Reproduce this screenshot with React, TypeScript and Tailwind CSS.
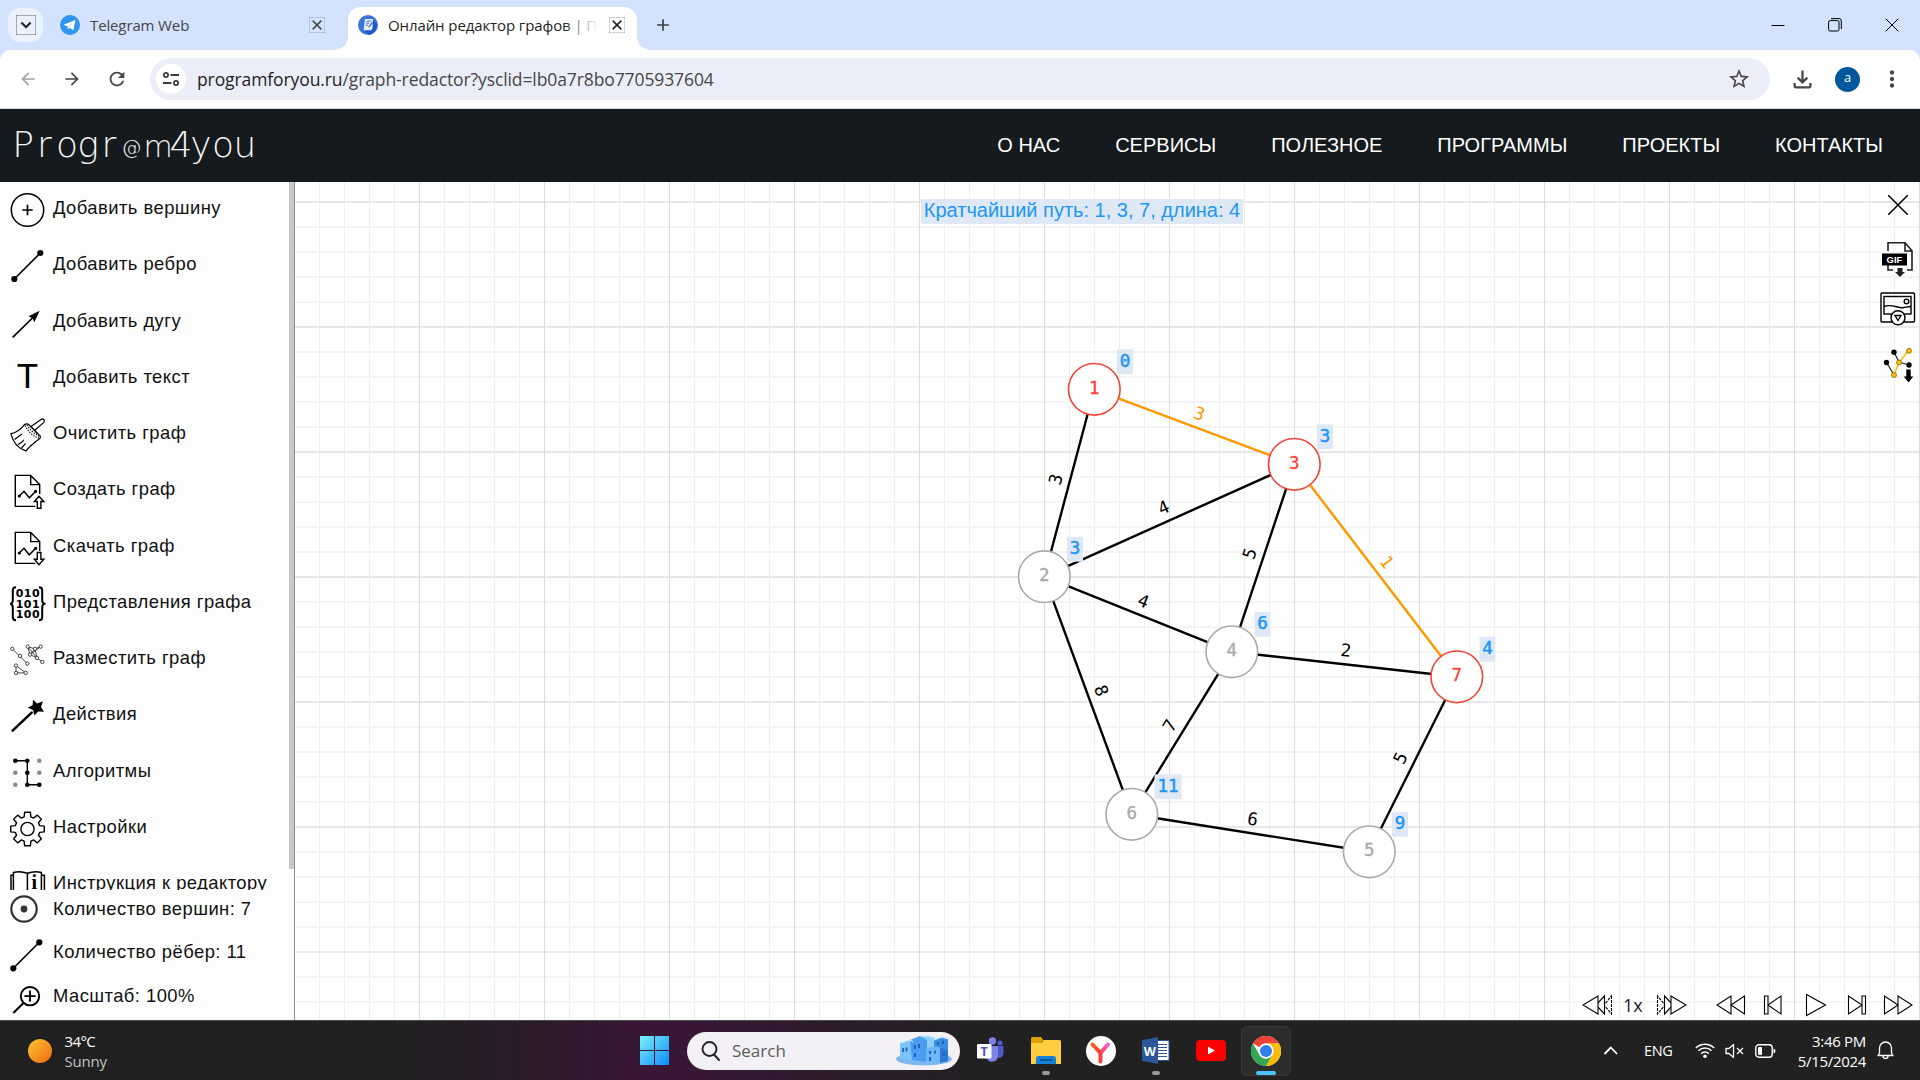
import React from "react";
import {
  MdArrowBack,
  MdArrowForward,
  MdRefresh,
  MdStarBorder,
  MdOutlineFileDownload,
  MdMoreVert,
  MdClose,
  MdAdd,
  MdKeyboardArrowDown,
} from "react-icons/md";

const INK = "#000";

/* ---------- Browser chrome ---------- */

function TabStrip() {
  return (
    <div className="flex h-[50px] shrink-0 items-stretch bg-[#d3e3fd]">
      <div className="flex w-[52px] items-center pl-2">
        <div className="flex h-[34px] w-[35px] items-center justify-center rounded-xl bg-[#ebf1fe]">
          <MdKeyboardArrowDown size={20} color="#1f1f1f" strokeWidth={0.8} stroke="#1f1f1f" />
        </div>
      </div>
      <div className="flex w-[280px] items-center pl-2">
        <svg width="20" height="20" viewBox="0 0 20 20">
          <circle cx="10" cy="10" r="10" fill="#2e96ee" />
          <path d="M3.6 9.8 15.4 5l-2 10.4-3.6-2.7-1.9 1.9-.3-3.2z" fill="#fff" />
          <path d="m7.6 11.4 5.3-4-4 4.9-.9 2.2z" fill="#b5d8f7" />
        </svg>
        <span className="ml-[10px] w-[219px] text-[15px] leading-5 tracking-[-0.13px] text-[#474747]">
          Telegram Web
        </span>
        <MdClose size={16} color="#474747" stroke="#474747" strokeWidth={0.6} />
      </div>
      <div className="flex h-[43px] self-end">
        <svg width="16" height="43" viewBox="0 0 16 43">
          <path d="M0 43C10 43 16 38 16 29V43z" fill="#fff" />
        </svg>
        <div className="flex w-[289px] items-center rounded-t-[13px] bg-white pb-[7px] pl-[10px]">
          <svg width="20" height="20" viewBox="0 0 20 20">
            <circle cx="10" cy="10" r="10" fill="#3b73dd" />
            <path d="M14 4 19 9a10 10 0 0 1-8 11L6 15z" fill="#2257c4" />
            <path d="M7 4h8l-.6 9.5-1.4 1.8H5.6z" fill="#e6eefc" />
            <path d="M8.4 6.2h4.6M8.2 8.2H11M8 10.2h2" stroke="#3b73dd" strokeWidth="1" />
            <path d="m10 12 4-5 1 .8-4 4.7z" fill="#2a62d0" />
          </svg>
          <div className="relative ml-[10px] mr-[10px] w-[211px] overflow-hidden whitespace-nowrap text-[15px] leading-5 tracking-[-0.1px] text-[#1f1f1f]">
            Онлайн редактор графов | Построение
            <span className="absolute inset-y-0 right-0 w-[36px] bg-gradient-to-r from-white/0 to-white" />
          </div>
          <MdClose size={16} color="#1f1f1f" stroke="#1f1f1f" strokeWidth={0.6} />
        </div>
        <svg width="16" height="43" viewBox="0 0 16 43">
          <path d="M16 43C6 43 0 38 0 29V43z" fill="#fff" />
        </svg>
      </div>
      <div className="flex flex-1 items-center">
        <MdAdd size={20} color="#3c3c3c" />
      </div>
      <div className="flex items-center gap-[43px] pr-[21px]">
        <svg width="14" height="14" viewBox="0 0 14 14">
          <path d="M.5 7.5h13" stroke="#000" />
        </svg>
        <svg width="14" height="14" viewBox="0 0 14 14" fill="none" stroke="#000">
          <rect x=".6" y="2.6" width="10.4" height="10.4" rx="1.5" />
          <path d="M3 .6h8A2.2 2.2 0 0 1 13.3 3v8" />
        </svg>
        <svg width="14" height="14" viewBox="0 0 14 14">
          <path d="m.7.7 12.6 12.6M13.3.7.7 13.3" stroke="#000" />
        </svg>
      </div>
    </div>
  );
}

function Toolbar() {
  return (
    <div className="h-[59px] shrink-0 bg-[#d3e3fd]">
      <div className="flex h-full items-center rounded-t-[11px] border-b border-[#d5dde0] bg-white">
        <div className="flex w-[150px] items-center gap-[24px] pl-[18px]">
          <MdArrowBack size={20} color="#a2a2a2" />
          <MdArrowForward size={20} color="#474747" />
          <MdRefresh size={22} color="#474747" />
        </div>
        <div className="flex h-[42px] w-[1620px] items-center rounded-full bg-[#ebeef8] pl-[6px] pr-[19px]">
          <div className="flex size-[30px] items-center justify-center rounded-full bg-white">
            <svg width="16" height="16" viewBox="0 0 16 16" fill="none" stroke="#3c3c3c" strokeWidth="1.8">
              <circle cx="3" cy="4" r="2.1" />
              <path d="M7.5 4H16M0 12h8.5" />
              <circle cx="13" cy="12" r="2.1" />
            </svg>
          </div>
          <span className="ml-[11px] flex-1 text-[17.5px] leading-6 tracking-[-0.1px] text-[#474747]">
            <span className="text-[#1f1f1f]">programforyou.ru</span>/graph-redactor?ysclid=lb0a7r8bo7705937604
          </span>
          <MdStarBorder size={24} color="#474747" />
        </div>
        <div className="flex flex-1 items-center pl-[19px]">
          <MdOutlineFileDownload size={27} color="#474747" />
          <div className="ml-[19px] flex size-[25px] items-center justify-center rounded-full bg-[#00579b] pb-[2px] text-[13px] font-medium text-white">
            a
          </div>
          <MdMoreVert size={26} color="#474747" className="ml-[19px]" />
        </div>
      </div>
    </div>
  );
}

/* ---------- Site header ---------- */

const LOGO: [string, number][] = [
  ["P", 23], ["r", 44.5], ["o", 67], ["g", 88], ["r", 109], ["@", 131.5],
  ["m", 158], ["4", 181], ["y", 201], ["o", 223], ["u", 245],
];

const NAV = ["О НАС", "СЕРВИСЫ", "ПОЛЕЗНОЕ", "ПРОГРАММЫ", "ПРОЕКТЫ", "КОНТАКТЫ"];

function SiteHeader() {
  return (
    <header className="flex h-[73px] shrink-0 items-center justify-between bg-[#151a1e] pr-[37px] font-['Liberation_Sans',sans-serif]">
      <svg width="270" height="73" viewBox="0 0 270 73">
        <g fill="#f4f4f4" textAnchor="middle" fontFamily="'DejaVu Sans', sans-serif" fontWeight="200" fontSize="36">
          {LOGO.map(([ch, x], i) => (
            <text key={i} x={x} y={ch === "@" ? 45 : 47.5} fontSize={ch === "@" ? 20 : ch === "m" ? 30 : 36}>
              {ch}
            </text>
          ))}
        </g>
      </svg>
      <nav className="flex gap-[55px] pb-[2px] text-[20px] leading-6 text-white">
        {NAV.map((n) => (
          <span key={n}>{n}</span>
        ))}
      </nav>
    </header>
  );
}

/* ---------- Sidebar ---------- */

function EdgeIcon() {
  return (
    <g>
      <path d="M4.3 31 30.3 5" stroke={INK} strokeWidth="1.6" />
      <circle cx="4.3" cy="31" r="3.1" fill={INK} />
      <circle cx="30.3" cy="5" r="3.1" fill={INK} />
    </g>
  );
}

function DocIcon({ up }: { up?: boolean }) {
  return (
    <g fill="none" stroke={INK} strokeWidth="1.4">
      <path d="M25.3 33.4H5.3V2.4h15.4l9 9.2V21M20.7 2.4v9.2h9" />
      <path d="m9.3 23 4.7-4.7 5.3 6.5 6.4-6.5" strokeWidth="1.5" />
      <circle cx="9.3" cy="23" r=".9" fill={INK} />
      <circle cx="25.7" cy="18.3" r=".9" fill={INK} />
      {up ? (
        <path d="m29 23.3-4.6 5.2h2.9v6.8h3.6v-6.8h2.9z" fill="#fdfdfd" />
      ) : (
        <path d="m29 34.7-4.6-5.4h2.9v-6.8h3.6v6.8h2.9z" fill="#fdfdfd" />
      )}
    </g>
  );
}

function BrushIcon() {
  return (
    <g fill="none" stroke={INK} strokeWidth="1.2" strokeLinejoin="round">
      <path d="M.8 16.6C6 16 11 12 14.5 7.6q2.4-1.6 4.6.2l11 11q1 1.600-.4 2.700C25 25 20 29 16 33.900 8 31.500 3 25 .8 16.600z" />
      <path d="M21 9.600 31 2.600q2-1.400 3 0t-.4 3L24.500 13.500" />
      <path d="m21 9.600 6.200 6.800" />
      <path d="M15 8.500c3 6 8 11 14.500 12.800" strokeDasharray="1.300 1.300" />
      <path d="M17 7.800c3 5 7.500 9.500 13 11.700" strokeDasharray="1.300 1.300" />
      <path d="M4.500 22.500 12 17M8 27.500l4.500-2.800 1.200-2M11.500 31l4.200-4.600" />
    </g>
  );
}

function MatrixIcon() {
  return (
    <g>
      <g fill="none" stroke={INK} strokeWidth="2">
        <path d="M6 1.300C3.500 1.300 2.800 2.500 2.800 4.500V14c0 2-.6 3.300-2 3.800 1.400.5 2 1.800 2 3.800v9.300c0 2.200.7 3.400 3.200 3.400" />
        <path d="M29 1.300c2.500 0 3.200 1.200 3.200 3.200V14c0 2 .6 3.300 2 3.800-1.400.5-2 1.800-2 3.800v9.300c0 2.200-.7 3.400-3.200 3.400" />
      </g>
      <g fontFamily="'DejaVu Sans', sans-serif" fontWeight="700" fontSize="11" textAnchor="middle" fill={INK}>
        {["010", "101", "100"].map((row, r) =>
          row.split("").map((d, c) => (
            <text key={`${r}${c}`} x={9.500 + c * 8.200} y={11.200 + r * 10.400}>
              {d}
            </text>
          )),
        )}
      </g>
    </g>
  );
}

function LayoutIcon() {
  const pts: [number, number][] = [
    [2.300, 6.900], [10, 13.900], [17.300, 21.600], [17.700, 4.600], [30.700, 4.600], [25, 6.900],
    [20, 12.600], [27, 15.900], [32.300, 19.900], [6, 23.600], [6, 30.900], [15.700, 30.900],
  ];
  return (
    <g stroke="#333" strokeWidth=".9" fill="none">
      <path d="M2.300 6.900 17.300 21.600M17.700 4.600 25 6.900l5.700-2.300M17.700 4.600 20 12.600 25 6.900l2 9 5.300 4M17.700 4.600 27 15.900 20 12.600 30.700 4.600M6 23.600v7.300h9.700z" />
      {pts.map(([x, y], i) => (
        <circle key={i} cx={x} cy={y} r="1.700" fill="#fff" />
      ))}
    </g>
  );
}

function AlgoIcon() {
  const cs = [5.300, 17.300, 29.300];
  const on = ["00", "10", "11", "12", "22"];
  return (
    <g>
      <path d="M5.300 5.700h12v24h12" stroke={INK} strokeWidth="1.400" fill="none" />
      {cs.map((x, c) =>
        cs.map((y, r) => (
          <circle key={`${c}${r}`} cx={x} cy={y + 0.400} r="2.300" fill={on.includes(`${c}${r}`) ? INK : "#8c8c8c"} />
        )),
      )}
    </g>
  );
}

function gearPath(cx: number, cy: number) {
  const out: string[] = [];
  for (let i = 0; i < 8; i++) {
    const a = (i * Math.PI) / 4 - Math.PI / 2;
    const p = (r: number, d: number) => `${(cx + r * Math.cos(a + d)).toFixed(2)} ${(cy + r * Math.sin(a + d)).toFixed(2)}`;
    out.push(`${p(12.600, -0.270)} L${p(17, -0.170)} L${p(17, 0.170)} L${p(12.600, 0.270)}`);
  }
  return "M" + out.join(" L") + "Z";
}

const ITEMS: { label: string; icon: React.ReactNode }[] = [
  {
    label: "Добавить вершину",
    icon: (
      <g fill="none" stroke={INK} strokeWidth="1.500">
        <circle cx="17.500" cy="18" r="16.200" />
        <path d="M12.300 18h10.400M17.500 12.800v10.400" strokeWidth="1.700" />
      </g>
    ),
  },
  { label: "Добавить ребро", icon: <EdgeIcon /> },
  {
    label: "Добавить дугу",
    icon: (
      <g>
        <path d="M2.700 32.400 24 11.500" stroke={INK} strokeWidth="1.700" />
        <path d="m29.700 5.700-11.200 5.500 4 2 1.800 4z" fill={INK} />
      </g>
    ),
  },
  {
    label: "Добавить текст",
    icon: (
      <text x="17.500" y="27" textAnchor="middle" fontFamily="'Liberation Sans', sans-serif" fontSize="35" fill={INK}>
        T
      </text>
    ),
  },
  { label: "Очистить граф", icon: <BrushIcon /> },
  { label: "Создать граф", icon: <DocIcon up /> },
  { label: "Скачать граф", icon: <DocIcon /> },
  { label: "Представления графа", icon: <MatrixIcon /> },
  { label: "Разместить граф", icon: <LayoutIcon /> },
  {
    label: "Действия",
    icon: (
      <g fill={INK}>
        <path d="M2.600 32.600 21.700 14.700" stroke={INK} strokeWidth="2.500" strokeLinecap="round" />
        <path d="m23 1.800 4.300 3.600 5.600-2.100-1.900 5.700 3 4.700-5.700-.3-3.900 4.200-1.300-5.500-5.200-2.300 4.800-2.800z" />
      </g>
    ),
  },
  { label: "Алгоритмы", icon: <AlgoIcon /> },
  {
    label: "Настройки",
    icon: (
      <g fill="none" stroke={INK} strokeWidth="1.400" strokeLinejoin="round">
        <path d={gearPath(17.500, 18)} />
        <circle cx="17.500" cy="18" r="6.600" />
      </g>
    ),
  },
  {
    label: "Инструкция к редактору",
    icon: (
      <g fill="none" stroke={INK} strokeWidth="1.500">
        <path d="M3.400 30V5.500q7-2 14 .8 7-2.800 14-.8V30M17.400 6.300V30M3.400 8.200H1V30M31.400 8.200h3V30" />
        <text x="24.400" y="22" textAnchor="middle" fontFamily="'Liberation Serif', serif" fontWeight="700" fontSize="20" fill={INK} stroke="none">
          i
        </text>
      </g>
    ),
  },
];

const STATS: { label: string; icon: React.ReactNode }[] = [
  {
    label: "Количество вершин: 7",
    icon: (
      <g>
        <circle cx="14" cy="16" r="12.700" fill="none" stroke="#333" strokeWidth="2.200" />
        <circle cx="14" cy="16" r="3.400" fill="#333" />
      </g>
    ),
  },
  {
    label: "Количество рёбер: 11",
    icon: (
      <g transform="translate(-1 1.300)">
        <EdgeIcon />
      </g>
    ),
  },
  {
    label: "Масштаб: 100%",
    icon: (
      <g fill="none" stroke={INK}>
        <circle cx="20" cy="16.200" r="9.200" strokeWidth="1.900" />
        <path d="M20 10.600v11.200M14.400 16.200h11.200" strokeWidth="1.800" />
        <path d="M13.500 23 3.300 33" strokeWidth="2" />
      </g>
    ),
  },
];

function Row({ icon, label, h }: { icon: React.ReactNode; label: string; h: string }) {
  return (
    <div className={`flex shrink-0 items-center pl-[10px] ${h}`}>
      <svg width="36" height="36" viewBox="0 0 36 36" className="shrink-0">
        {icon}
      </svg>
      <span className="ml-[7px] whitespace-nowrap pb-[4px] text-[18.4px] leading-6 tracking-[0.45px]">{label}</span>
    </div>
  );
}

function Sidebar() {
  return (
    <aside className="flex w-[295px] shrink-0 flex-col bg-[#fdfdfd] font-['Liberation_Sans',sans-serif] text-[#111]">
      <div className="flex h-[708px] shrink-0 overflow-hidden">
        <div className="w-[289px]">
          {ITEMS.map((it) => (
            <Row key={it.label} {...it} h="h-[56.25px]" />
          ))}
        </div>
        <div className="h-[687px] w-[5px] bg-[#c9c9c9]" />
        <div className="w-px bg-[#8f8f8f]" />
      </div>
      <div className="flex-1 border-r border-[#8f8f8f]">
        <Row {...STATS[0]} h="h-[42px]" />
        <Row {...STATS[1]} h="h-[44px]" />
        <Row {...STATS[2]} h="h-[44px]" />
      </div>
    </aside>
  );
}

/* ---------- Graph canvas ---------- */

type GNode = { id: number; x: number; y: number; dist: number; hot?: boolean };

const NODES: GNode[] = [
  { id: 1, x: 1094.300, y: 389.300, dist: 0, hot: true },
  { id: 2, x: 1044.300, y: 576.700, dist: 3 },
  { id: 3, x: 1294.300, y: 464.300, dist: 3, hot: true },
  { id: 4, x: 1231.800, y: 651.800, dist: 6 },
  { id: 5, x: 1369.300, y: 851.800, dist: 9 },
  { id: 6, x: 1131.800, y: 814.300, dist: 11 },
  { id: 7, x: 1456.800, y: 676.800, dist: 4, hot: true },
];

const EDGES: { a: number; b: number; w: number; hot?: boolean }[] = [
  { a: 2, b: 1, w: 3 },
  { a: 1, b: 3, w: 3, hot: true },
  { a: 2, b: 3, w: 4 },
  { a: 2, b: 4, w: 4 },
  { a: 4, b: 3, w: 5 },
  { a: 3, b: 7, w: 1, hot: true },
  { a: 4, b: 7, w: 2 },
  { a: 2, b: 6, w: 8 },
  { a: 6, b: 4, w: 7 },
  { a: 6, b: 5, w: 6 },
  { a: 5, b: 7, w: 5 },
];

function Graph() {
  const at = (id: number) => NODES[id - 1];
  return (
    <svg width="1625" height="838" viewBox="295 182 1625 838" className="block">
      <defs>
        <pattern id="minor" x="19" y="1" width="25" height="25" patternUnits="userSpaceOnUse">
          <rect width="1" height="25" fill="#efefef" />
          <rect width="25" height="2" fill="#f4f4f4" />
        </pattern>
        <pattern id="major" x="44" y="76" width="125" height="125" patternUnits="userSpaceOnUse">
          <rect width="125" height="2" fill="#e8e8e8" />
          <rect width="1" height="125" fill="#dcdcdc" />
        </pattern>
      </defs>
      <rect x="295" y="182" width="1625" height="838" fill="#fff" />
      <rect x="295" y="182" width="1625" height="838" fill="url(#minor)" />
      <rect x="295" y="182" width="1625" height="838" fill="url(#major)" />
      {EDGES.map((e, i) => {
        const a = at(e.a);
        const b = at(e.b);
        const ang = (Math.atan2(b.y - a.y, b.x - a.x) * 180) / Math.PI;
        const color = e.hot ? "#ff9800" : "#000";
        return (
          <g key={i}>
            <path d={`M${a.x} ${a.y}L${b.x} ${b.y}`} stroke={color} strokeWidth="2.400" />
            <text
              transform={`translate(${(a.x + b.x) / 2} ${(a.y + b.y) / 2}) rotate(${ang})`}
              y="-8"
              textAnchor="middle"
              fontSize="17.500"
              fontFamily="'DejaVu Sans Mono', monospace"
              fill={color}
            >
              {e.w}
            </text>
          </g>
        );
      })}
      {NODES.map((n) => {
        const color = n.hot ? "#f44336" : "#a9a9a9";
        const lw = n.dist > 9 ? 27 : 16;
        return (
          <g key={n.id} fontFamily="'DejaVu Sans Mono', monospace" fontSize="17.500" textAnchor="middle">
            <circle cx={n.x} cy={n.y} r="25.800" fill="#fff" stroke={color} strokeWidth="1.600" />
            <text x={n.x} y={n.y + 4.300} fill={color} stroke={color} strokeWidth=".3">
              {n.id}
            </text>
            <rect x={n.x + 22.700} y={n.y - 40} width={lw} height="25" fill="#dfe9f5" />
            <text x={n.x + 22.700 + lw / 2} y={n.y - 22.500} fill="#2196f3" stroke="#2196f3" strokeWidth=".5">
              {n.dist}
            </text>
          </g>
        );
      })}
    </svg>
  );
}

function CanvasTools() {
  return (
    <div className="absolute right-[4px] top-[13px] flex w-[36px] flex-col items-center">
      <svg width="20" height="20" viewBox="0 0 20 20">
        <path d="m0 0 20 20M20 0 0 20" stroke="#000" strokeWidth="1.500" />
      </svg>
      <svg width="36" height="36" viewBox="0 0 36 36" className="mt-[26px]">
        <path d="M8 10V1.800h17l7 8V29h-5M8 23v6h5M25 1.800V10h7" fill="none" stroke="#222" strokeWidth="1.600" />
        <rect x="2" y="12.500" width="25" height="12" fill="#000" />
        <text x="14.500" y="22" textAnchor="middle" fontFamily="'Liberation Sans', sans-serif" fontWeight="700" fontSize="9.500" fill="#fff">
          GIF
        </text>
        <path d="M17.500 27h5v4H25l-5 5-5-5h2.500z" fill="#222" />
      </svg>
      <svg width="36" height="36" viewBox="0 0 36 36" className="mt-[14px]" fill="none" stroke="#000" strokeWidth="1.400">
        <rect x="1" y="2" width="33.500" height="29" rx="1" />
        <rect x="4" y="5.500" width="27" height="17.500" />
        <circle cx="26.500" cy="10.400" r="2.300" />
        <path d="M4 15.500c8-3 14 2 19 1.200 4-.7 5-1.200 8-1.200" />
        <circle cx="18" cy="26.700" r="7" fill="#fff" />
        <path d="M15 24.500h6l-3 5z" />
      </svg>
      <svg width="36" height="36" viewBox="0 0 36 36" className="mt-[21px]">
        <path d="m6.500 14.500 7.500 12.500M14 4l5 10 10 3" stroke="#222" strokeWidth="1.200" fill="none" />
        <path d="m14 27 5-12.500L29 2" stroke="#ffc107" strokeWidth="1.600" fill="none" />
        <circle cx="6.500" cy="14.500" r="2.700" />
        <circle cx="14" cy="4.300" r="2.700" />
        <circle cx="29" cy="17" r="2.700" />
        <g fill="#ffc107" stroke="#7a5b00" strokeWidth=".7">
          <circle cx="14" cy="27" r="2.500" />
          <circle cx="19" cy="14.500" r="2.500" />
          <circle cx="29" cy="2.800" r="2.500" />
        </g>
        <path d="M26.300 21.500h4.400v7h2.500L28.500 34.500l-4.700-6h2.500z" />
      </svg>
    </div>
  );
}

function PlayerControls() {
  const s = { fill: "#fff", stroke: "#000", strokeWidth: 1.100 };
  return (
    <div className="absolute bottom-[3px] right-[7px] flex h-[24px] items-center">
      <svg width="31" height="24" viewBox="0 0 31 24" {...s}>
        <path d="M29.500 3v18L22 12z" strokeDasharray="3 1" />
        <path d="M22.500 3v18L14 12z" />
        <path d="M16 3v18L1 12z" />
      </svg>
      <span className="ml-[10px] w-[22px] font-['Open_Sans',sans-serif] text-[18px] leading-6 text-[#222]">1x</span>
      <svg width="31" height="24" viewBox="0 0 31 24" className="ml-[11px]" {...s}>
        <path d="M1.500 3v18L9 12z" strokeDasharray="3 1" />
        <path d="M8.500 3v18L17 12z" />
        <path d="M15 3v18l15-9z" />
      </svg>
      <svg width="30" height="24" viewBox="0 0 30 24" className="ml-[29px]" {...s}>
        <path d="M28.500 3v18L15 12zM15 3v18L1 12z" />
      </svg>
      <svg width="20" height="24" viewBox="0 0 20 24" className="ml-[17px]" {...s}>
        <path d="M1.500 3H5v18H1.500zM18 3v18L5 12z" />
      </svg>
      <svg width="22" height="24" viewBox="0 0 22 24" className="ml-[22px]" {...s}>
        <path d="M1.500 1.500v21L20.500 12z" />
      </svg>
      <svg width="20" height="24" viewBox="0 0 20 24" className="ml-[20px]" {...s}>
        <path d="M15 3h3.500v18H15zM1.500 3v18L15 12z" />
      </svg>
      <svg width="30" height="24" viewBox="0 0 30 24" className="ml-[16px]" {...s}>
        <path d="M1.500 3v18L15 12zM15 3v18l14-9z" />
      </svg>
    </div>
  );
}

function Canvas() {
  return (
    <main className="relative flex-1 overflow-hidden bg-white">
      <Graph />
      <div className="absolute left-[626px] top-[17px] flex h-[25px] w-[322px] items-center justify-center whitespace-nowrap bg-[#dfe9f5] pb-[3px] font-['Liberation_Sans',sans-serif] text-[20px] leading-6 text-[#2196f3]">
        Кратчайший путь: 1, 3, 7, длина: 4
      </div>
      <CanvasTools />
      <PlayerControls />
    </main>
  );
}

/* ---------- Taskbar ---------- */

function TaskIcon({ children, mark }: { children: React.ReactNode; mark?: "idle" | "active" }) {
  return (
    <div
      className={`relative flex h-[50px] w-[50px] items-center justify-center rounded-md ${
        mark === "active" ? "border border-[#383838] bg-[#2d2d2d]" : ""
      }`}
    >
      {children}
      {mark === "idle" && <span className="absolute bottom-[1px] h-[4px] w-[8px] rounded-full bg-[#9a9a9a]" />}
      {mark === "active" && <span className="absolute bottom-0 h-[4px] w-[20px] rounded-full bg-[#4cc2ff]" />}
    </div>
  );
}

function Taskbar() {
  return (
    <footer className="flex h-[60px] shrink-0 items-center border-t border-[#4b4b4b] bg-[linear-gradient(90deg,#202020_0px,#212021_400px,#2b1b2a_520px,#391636_650px,#351834_720px,#2a1d2a_860px,#212121_990px)] text-white">
      <div className="flex w-[640px] items-center pl-[28px]">
        <div className="size-[24px] rounded-full bg-gradient-to-br from-[#f7c531] to-[#f0650f]" />
        <div className="ml-[12.500px] text-[15px] leading-[20px]">
          <div className="tracking-[-0.600px]">34°C</div>
          <div className="tracking-[-0.200px] text-[#c4c4c4]">Sunny</div>
        </div>
      </div>
      <svg width="29" height="29" viewBox="0 0 29 29">
        <defs>
          <linearGradient id="win" x1="0" y1="0" x2="1" y2="1">
            <stop offset="0" stopColor="#7df0ff" />
            <stop offset="1" stopColor="#0c8cf5" />
          </linearGradient>
        </defs>
        <path d="M0 0h14v14H0zM15 0h14v14H15zM0 15h14v14H0zM15 15h14v14H15z" fill="url(#win)" />
      </svg>
      <div className="ml-[18px] flex h-[38px] w-[273px] items-center rounded-full bg-[#f3f1f5] pl-[14px] pr-[8px]">
        <svg width="19" height="20" viewBox="0 0 19 20" fill="none" stroke="#222" strokeWidth="1.900">
          <circle cx="8.500" cy="8" r="7" />
          <path d="m13 13.500 5 5.500" strokeLinecap="round" />
        </svg>
        <span className="ml-[12px] flex-1 text-[17px] leading-6 text-[#5c5c5c]">Search</span>
        <svg width="56" height="31" viewBox="0 0 56 31">
          <ellipse cx="28" cy="24" rx="28" ry="6.500" fill="#7db9ee" />
          <path d="M4 8 14 5l3 2v18L4 23z" fill="#7cc4fb" />
          <path d="M14 5 24 1l7 3v23L16 25z" fill="#4a9df0" />
          <path d="M24 1h10l5 2v20l-8 4V5z" fill="#8fd0ff" />
          <path d="m38 5 8-3 6 2v21l-14 2z" fill="#3f8ee6" />
          <path d="m30 14 8-3 7 2v15l-15-1z" fill="#6db8f8" />
          <path d="m44 13 8 2v11l-8 2z" fill="#2b78d4" />
          <path d="M7 13v4M10.500 12.500v4M19 10v4M23 9v4M19 18v4M34 16v3M39 15.500v3M34 22v4M48 18v3M42 7v3M47 6v3" stroke="#1e5fb8" strokeWidth="1.800" />
          <path d="M4 8 14 5l3 2M24 1h10l5 2M38 5l8-3 6 2" stroke="#c5e8ff" strokeWidth="1.200" fill="none" />
        </svg>
      </div>
      <div className="ml-[6px] flex items-center gap-[5px]">
        <TaskIcon>
          <svg width="28" height="27" viewBox="0 0 28 27">
            <circle cx="23" cy="6" r="2.600" fill="#5059c9" />
            <circle cx="15.500" cy="4" r="3.700" fill="#7b83eb" />
            <path d="M20 9h6.500v7.500a4.500 4.500 0 0 1-7 3.500z" fill="#5059c9" />
            <path d="M9.500 9H21v10a6 6 0 0 1-11.500 2z" fill="#7b83eb" />
            <rect x="0" y="7" width="14.500" height="14.500" rx="1.200" fill="#fff" />
            <text x="7.200" y="18.700" textAnchor="middle" fontFamily="'Open Sans', sans-serif" fontWeight="700" fontSize="12.500" fill="#4b53bc">
              T
            </text>
          </svg>
        </TaskIcon>
        <TaskIcon mark="idle">
          <svg width="30" height="27" viewBox="0 0 30 27">
            <path d="M0 1.500Q0 0 1.500 0H10l3 4h-2l-2 4H0z" fill="#e0a100" />
            <path d="M0 6h10l3-3h15.500Q30 3 30 4.500V27H0z" fill="#ffcd42" />
            <path d="M5 27v-5.500Q5 19 7.500 19h15q2.500 0 2.500 2.500V27z" fill="#1583d8" />
            <rect x="9" y="22" width="12.500" height="1.800" rx=".9" fill="#0a4f93" />
          </svg>
        </TaskIcon>
        <TaskIcon>
          <svg width="30" height="30" viewBox="0 0 30 30">
            <defs>
              <linearGradient id="ya" x1="0" y1="0" x2="1" y2="0">
                <stop offset="0" stopColor="#ff5a1f" />
                <stop offset=".45" stopColor="#fa3c2c" />
                <stop offset="1" stopColor="#ff5ce0" />
              </linearGradient>
            </defs>
            <circle cx="15" cy="15" r="15" fill="#fff" />
            <path d="m6.500 8.500 8 8.500 7.500-8.500M14.500 17v8.500" stroke="url(#ya)" strokeWidth="4" fill="none" strokeLinejoin="round" strokeLinecap="round" />
          </svg>
        </TaskIcon>
        <TaskIcon mark="idle">
          <svg width="28" height="27" viewBox="0 0 28 27">
            <rect x="12" y="3.500" width="15" height="20" rx="1" fill="#fff" stroke="#2b579a" />
            <path d="M15 7.500h10M15 10.500h10M15 13.500h10M15 16.500h10M15 19.500h10" stroke="#2b579a" strokeWidth="1.200" />
            <path d="M0 3.200 16 0v27L0 23.800z" fill="#2b579a" />
            <text x="7.800" y="18.500" textAnchor="middle" fontFamily="'Open Sans', sans-serif" fontWeight="700" fontSize="12.500" fill="#fff">
              W
            </text>
          </svg>
        </TaskIcon>
        <TaskIcon>
          <svg width="30" height="21" viewBox="0 0 30 21">
            <rect width="30" height="21" rx="4" fill="#f00" />
            <path d="M12 6.500v8l7-4z" fill="#fff" />
          </svg>
        </TaskIcon>
        <TaskIcon mark="active">
          <svg width="30" height="30" viewBox="-15 -15 30 30">
            <circle r="15" fill="#fff" />
            <path d="M-13 -7.500A15 15 0 0 1 13 -7.500H0A7.500 7.500 0 0 0 -6.500 -3.750z" fill="#ea4335" />
            <path d="M13 -7.500A15 15 0 0 1 0 15L6.500 3.750A7.500 7.500 0 0 0 0 -7.500z" fill="#fbbc05" />
            <path d="M0 15A15 15 0 0 1 -13 -7.500L-6.500 3.750A7.500 7.500 0 0 0 6.500 3.750z" fill="#34a853" />
            <circle r="7.500" fill="#fff" />
            <circle r="6" fill="#2f7de9" />
          </svg>
        </TaskIcon>
      </div>
      <div className="flex flex-1 items-center justify-end pr-[26px]">
        <svg width="16" height="9" viewBox="0 0 16 9" fill="none" stroke="#fff" strokeWidth="1.800">
          <path d="m1.500 8 6.300-6.500L14 8" />
        </svg>
        <span className="ml-[25.500px] w-[31px] whitespace-nowrap text-[14.500px] leading-5 tracking-[-0.300px]">ENG</span>
        <svg width="20" height="17" viewBox="0 0 20 17" className="ml-[20px]" fill="none" stroke="#fff" strokeWidth="1.500">
          <path d="M.8 6a13 13 0 0 1 18.400 0M3.500 8.800a9.200 9.200 0 0 1 13 0M6.200 11.600a5.400 5.400 0 0 1 7.600 0" />
          <circle cx="10" cy="14.300" r="1.800" fill="#fff" stroke="none" />
        </svg>
        <svg width="20" height="16" viewBox="0 0 20 16" className="ml-[10px]" fill="none" stroke="#fff" strokeWidth="1.300">
          <path d="M1 5.500h3l4.500-4v13L4 10.500H1z" strokeLinejoin="round" />
          <path d="m12 5 6 6M18 5l-6 6" />
        </svg>
        <svg width="21" height="14" viewBox="0 0 21 14" className="ml-[10px]">
          <rect x=".8" y=".8" width="16.400" height="12.400" rx="3" fill="none" stroke="#fff" strokeWidth="1.400" />
          <rect x="3" y="3" width="4" height="8" rx="1" fill="#fff" />
          <path d="M18.500 4.500q2 .5 2 2.500t-2 2.500z" fill="#fff" />
        </svg>
        <div className="ml-[12px] w-[78px] whitespace-nowrap text-right text-[15px] leading-[20px] tracking-[-0.300px]">
          <div>3:46 PM</div>
          <div>5/15/2024</div>
        </div>
        <svg width="17" height="19" viewBox="0 0 17 19" className="ml-[11px]" fill="none" stroke="#fff" strokeWidth="1.300">
          <path d="M1 14.500 2.500 12V7a6 6 0 0 1 12 0v5l1.500 2.500zM6 15a2.500 2.500 0 0 0 5 0" strokeLinejoin="round" />
        </svg>
      </div>
    </footer>
  );
}

export default function App() {
  return (
    <div className="flex h-[1080px] w-[1920px] flex-col overflow-hidden bg-white font-['Open_Sans','Noto_Sans',sans-serif]">
      <TabStrip />
      <Toolbar />
      <SiteHeader />
      <div className="flex h-[838px] shrink-0">
        <Sidebar />
        <Canvas />
      </div>
      <Taskbar />
    </div>
  );
}
